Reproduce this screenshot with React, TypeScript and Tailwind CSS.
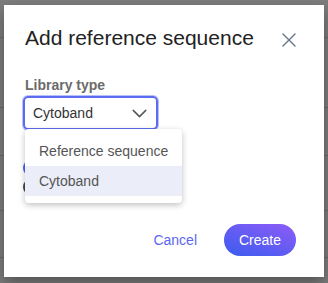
import { X, ChevronDown } from "lucide-react";

const font = { fontFamily: '"Liberation Sans", Arial, sans-serif' };

// Dimmed rows of the page behind the modal.
const rowHeights = ["h-[38px]", "h-[70px]", "h-[48px]", "h-[55px]", "h-[47px]"];

export default function App() {
  return (
    <div className="relative h-[283px] w-[328px] overflow-hidden bg-[#7d7d7d]" style={font}>
      <div className="flex flex-col">
        {rowHeights.map((h, i) => (
          <div key={i} className={`${h} border-b border-[#6b6b6b]`} />
        ))}
      </div>

      <div className="absolute inset-0 flex justify-center pt-[5px]">
        <div className="flex h-[272px] w-[320px] flex-col bg-white shadow-[0_6px_14px_rgba(0,0,0,0.35)]">
          <div className="flex items-start justify-between pl-[21px] pr-[23px] pt-[21px]">
            <h2 className="h-[24px] text-[21px] leading-[24px] text-[#222]">Add reference sequence</h2>
            <button className="mt-[2px] text-[#66758a]">
              <X size={24} strokeWidth={1.4} />
            </button>
          </div>

          <div className="mt-[23px] pl-[21px]">
            <label className="block text-[14px] font-bold leading-[20px] text-[#6b6b6b]">Library type</label>
            <div className="relative mt-[1px] -ml-[2px] w-[135px]">
              <div className="flex h-[34px] items-center justify-between rounded-[5px] border-2 border-[#5b6cf0] pl-[8px] pr-[4px] shadow-[0_0_0_1px_#b8c0f8]">
                <span className="text-[14px] text-[#333]">Cytoband</span>
                <ChevronDown size={25} strokeWidth={1.4} className="text-[#555]" />
              </div>

              <div className="mt-[30px] flex flex-col gap-[3px]">
                <span className="h-[16px] w-[16px] rounded-full bg-[#4c5ff0]" />
                <span className="h-[16px] w-[16px] rounded-full border-2 border-[#444]" />
              </div>

              <ul className="absolute left-[2px] top-[33px] w-[157px] rounded-[4px] bg-white py-[7px] text-[14px] text-[#555] shadow-[0_2px_6px_rgba(0,0,0,0.25)]">
                <li className="flex h-[30px] items-center whitespace-nowrap px-[14px]">Reference sequence</li>
                <li className="flex h-[30px] items-center whitespace-nowrap bg-[#ebedf9] px-[14px]">Cytoband</li>
              </ul>
            </div>
          </div>

          <div className="mt-auto flex items-center justify-end gap-[11px] pb-[21px] pr-[28px]">
            <button className="h-[32px] px-[16px] text-[14px] text-[#5a67f0]">Cancel</button>
            <button className="h-[32px] w-[72px] rounded-full bg-[linear-gradient(200deg,#8e5cf6,#3b5cf0)] text-[14px] text-white">
              Create
            </button>
          </div>
        </div>
      </div>
    </div>
  );
}
